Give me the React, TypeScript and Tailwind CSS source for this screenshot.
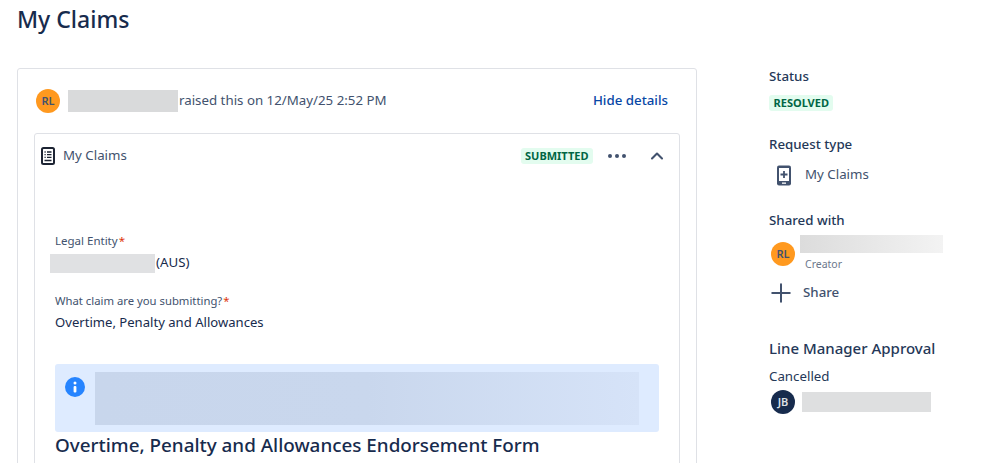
import { ChevronUp, Plus } from "lucide-react";

const font = { fontFamily: '"Noto Sans", sans-serif' };

function Avatar({ initials, dark }: { initials: string; dark?: boolean }) {
  return (
    <div
      className={`w-6 h-6 shrink-0 rounded-full flex items-center justify-center text-[11px] font-semibold ${
        dark ? "bg-[#172b4d] text-[#dfe1e6]" : "bg-[#ff991f] text-[#42526e]"
      }`}
    >
      {initials}
    </div>
  );
}

function Lozenge({ children }: { children: string }) {
  return (
    <span className="inline-flex items-center h-4 px-[4.5px] rounded-[3px] bg-[#e3fcef] text-[#006644] text-[11px] leading-4 font-bold">
      {children}
    </span>
  );
}

function FormIcon() {
  return (
    <svg width="16" height="18" viewBox="0 0 16 18" fill="none">
      <rect x="2" y="1" width="12" height="16" rx="1.5" stroke="#1d2433" strokeWidth="2" />
      <path d="M4.5 5h1.2M7 5h4.5M4.5 7.7h1.2M7 7.7h4.5M4.5 10.4h1.2M7 10.4h4.5M4.5 13.5h7" stroke="#1d2433" strokeWidth="1.3" />
    </svg>
  );
}

function PhoneIcon() {
  return (
    <svg width="16" height="21" viewBox="0 0 16 21">
      <rect x="1" y="0.5" width="14" height="20" rx="2" fill="#42526e" />
      <rect x="3" y="3" width="10" height="13" fill="#fff" />
      <path d="M8 6v7M4.5 9.5h7" stroke="#42526e" strokeWidth="1.8" />
      <rect x="6" y="17.5" width="4" height="1.3" fill="#fff" />
    </svg>
  );
}

function InfoIcon() {
  return (
    <svg width="20" height="20" viewBox="0 0 20 20">
      <circle cx="10" cy="10" r="10" fill="#2684ff" />
      <circle cx="10" cy="6" r="1.5" fill="#fff" />
      <rect x="8.6" y="9" width="2.8" height="6.5" rx="1" fill="#fff" />
    </svg>
  );
}

function Dots() {
  return (
    <div className="flex gap-[3px]">
      <span className="w-1 h-1 rounded-full bg-[#42526e]" />
      <span className="w-1 h-1 rounded-full bg-[#42526e]" />
      <span className="w-1 h-1 rounded-full bg-[#42526e]" />
    </div>
  );
}

export default function App() {
  return (
    <div className="w-[992px] h-[463px] overflow-hidden bg-white flex text-[#172b4d] text-[13.3px]" style={font}>
      <main className="w-[769px] shrink-0 pl-[17px]">
        <h1 className="text-[23px] leading-[28px] font-medium mt-[5px] mb-[35px]">My Claims</h1>

        <div className="w-[680px] border border-[#dfe1e6] rounded-[3px] pt-[20px] px-4 h-[400px]">
          <div className="flex items-center h-6 pl-[2px] pr-[12px] mb-[20px]">
            <Avatar initials="RL" />
            <div className="ml-2 w-[110px] h-[22px] bg-[#d9dadb]" />
            <span className="ml-px text-[#42526e]">raised this on 12/May/25 2:52 PM</span>
            <a className="ml-auto text-[#0747a6] font-medium">Hide details</a>
          </div>

          <div className="w-[646px] border border-[#dfe1e6] rounded-[3px] h-[400px]">
            <div className="flex items-center h-[44px] pl-[5px] pr-[12px]">
              <FormIcon />
              <span className="ml-[7px] text-[#42526e]">My Claims</span>
              <div className="ml-auto flex items-center">
                <Lozenge>SUBMITTED</Lozenge>
                <div className="ml-[15px]">
                  <Dots />
                </div>
                <ChevronUp className="ml-[21px] text-[#42526e]" size={20} strokeWidth={2.5} />
              </div>
            </div>

            <div className="pt-[55px] pl-[20px] pr-[20px]">
              <div className="text-[11.5px] leading-4 text-[#42526e]">
                Legal Entity<span className="text-[#de350b] ml-px">*</span>
              </div>
              <div className="flex items-center h-5 mt-[4px] -ml-[5px]">
                <div className="w-[105px] h-[19px] bg-[#e0e1e3]" />
                <span className="ml-px">(AUS)</span>
              </div>

              <div className="text-[11.3px] leading-4 text-[#42526e] mt-[20px]">
                What claim are you submitting?<span className="text-[#de350b] ml-px">*</span>
              </div>
              <div className="text-[13.1px] leading-5 mt-[3px]">Overtime, Penalty and Allowances</div>

              <div className="mt-[32px] w-[604px] h-[68px] rounded-[3px] bg-[#deebff] flex pl-[10px] pt-[13px] pr-[20px]">
                <InfoIcon />
                <div className="ml-[10px] -mt-[5px] w-[544px] h-[53px] bg-gradient-to-r from-[#c8d6ec] via-[#c9d7ed] to-[#d6e3f8]" />
              </div>
              <h2 className="text-[18.85px] leading-[26px] font-medium">
                Overtime, Penalty and Allowances Endorsement Form
              </h2>
            </div>
          </div>
        </div>
      </main>

      <aside className="flex-1 pt-[67px]">
        <h3 className="leading-[18px] font-medium text-[#253858]">Status</h3>
        <div className="mt-[10px] flex">
          <Lozenge>RESOLVED</Lozenge>
        </div>

        <h3 className="mt-[24px] leading-[18px] font-medium text-[#253858]">Request type</h3>
        <div className="mt-[10px] flex items-center h-[24px] pl-[7px]">
          <PhoneIcon />
          <span className="ml-[13px] text-[#42526e]">My Claims</span>
        </div>

        <h3 className="mt-[24px] leading-[18px] font-medium text-[#253858]">Shared with</h3>
        <div className="mt-[6px] flex pl-[2px]">
          <div className="mt-[7px]">
            <Avatar initials="RL" />
          </div>
          <div className="ml-[5px]">
            <div className="w-[143px] h-[18px] bg-gradient-to-r from-[#dcdcdc] to-[#f3f3f3]" />
            <div className="ml-[5px] mt-[3px] text-[10.5px] leading-[16px] text-[#6b778c]">Creator</div>
          </div>
        </div>
        <div className="mt-[9px] flex items-center h-6">
          <Plus className="-ml-[3px] -my-[3px] shrink-0 text-[#42526e]" size={30} strokeWidth={1.6} />
          <span className="ml-[7px] font-medium text-[#42526e]">Share</span>
        </div>

        <h3 className="mt-[33px] text-[15px] leading-[20px] font-medium text-[#253858]">Line Manager Approval</h3>
        <div className="mt-[9px] leading-[18px] text-[#253858]">Cancelled</div>
        <div className="mt-[5px] flex items-center pl-[2px]">
          <Avatar initials="JB" dark />
          <div className="ml-[7px] w-[129px] h-[20px] bg-[#dedfe0]" />
        </div>
      </aside>
    </div>
  );
}
